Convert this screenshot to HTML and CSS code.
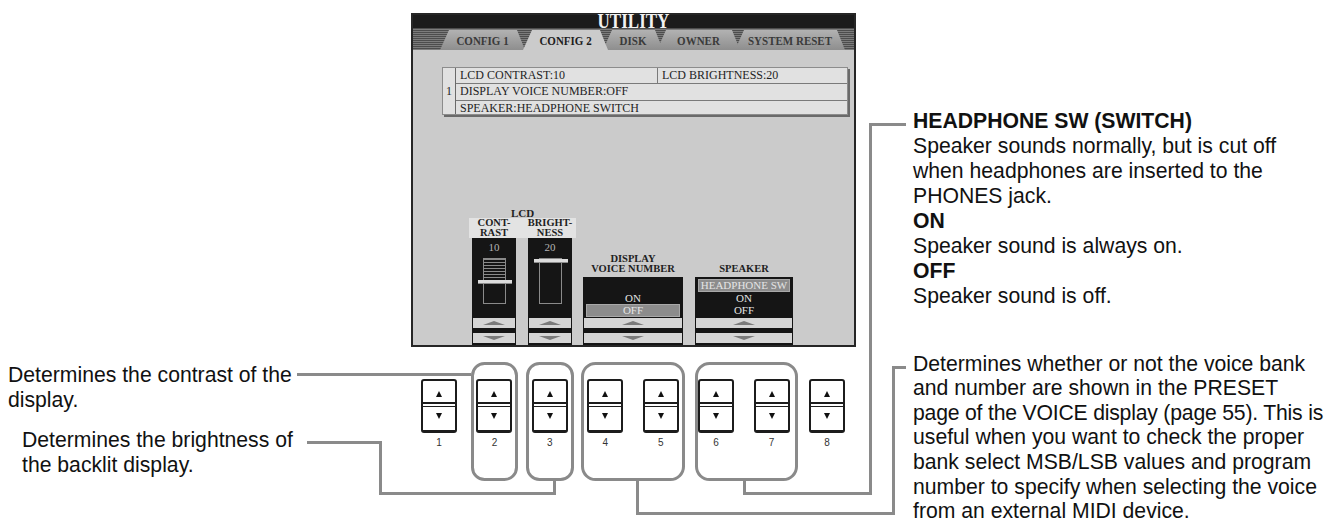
FILE: index.html
```html
<!DOCTYPE html>
<html>
<head>
	<title>utility - config 2</title>

	<link rel="stylesheet" href="styles.css">

</head>
<body>

<div class="page">

	<div class="notes-left">
		<p class="note note-contrast">Determines the contrast of the<br>display.</p>
		<p class="note note-bright">Determines the brightness of<br>the backlit display.</p>
	</div>

	<div class="panel">
		<div class="lcd">
			<div class="lcd-title"><span>UTILITY</span></div>
			<div class="tabs">
				<div class="tab tab-c1"><span>CONFIG 1</span></div>
				<div class="tab tab-c2 active"><span>CONFIG 2</span></div>
				<div class="tab tab-disk"><span>DISK</span></div>
				<div class="tab tab-owner"><span>OWNER</span></div>
				<div class="tab tab-reset"><span>SYSTEM RESET</span></div>
			</div>

			<div class="lcd-body">
				<div class="list">
					<div class="list-num">1</div>
					<div class="list-rows">
						<div class="row"><span class="cell cell-first">LCD CONTRAST:10</span><span class="cell">LCD BRIGHTNESS:20</span></div>
						<div class="row"><span class="cell">DISPLAY VOICE NUMBER:OFF</span></div>
						<div class="row"><span class="cell">SPEAKER:HEADPHONE SWITCH</span></div>
					</div>
				</div>

				<div class="controls">
					<div class="ctl ctl-lcd">
						<div class="ctl-head">LCD</div>
						<div class="slider-labels">
							<div class="slider-label">CONT-<span>RAST</span></div>
							<div class="slider-label">BRIGHT-<span>NESS</span></div>
						</div>
						<div class="sliders">
							<div class="slider">
								<div class="val">10</div>
								<div class="track">
									<div class="fill"></div>
									<div class="thumb thumb-contrast"></div>
								</div>
								<div class="updown"><div class="up"></div><div class="down"></div></div>
							</div>
							<div class="slider">
								<div class="val">20</div>
								<div class="track">
									<div class="thumb thumb-bright"></div>
								</div>
								<div class="updown"><div class="up"></div><div class="down"></div></div>
							</div>
						</div>
					</div>

					<div class="ctl ctl-voice">
						<div class="ctl-title">DISPLAY<br>VOICE NUMBER</div>
						<div class="opt-box">
							<div class="opt"></div>
							<div class="opt">ON</div>
							<div class="opt sel">OFF</div>
							<div class="updown"><div class="up"></div><div class="down"></div></div>
						</div>
					</div>

					<div class="ctl ctl-speaker">
						<div class="ctl-title">SPEAKER</div>
						<div class="opt-box">
							<div class="opt sel">HEADPHONE SW</div>
							<div class="opt">ON</div>
							<div class="opt">OFF</div>
							<div class="updown"><div class="up"></div><div class="down"></div></div>
						</div>
					</div>
				</div>
			</div>
		</div>

		<div class="keys">
			<div class="key-wrap"><div class="key"><div class="key-up"></div><div class="key-mid"></div><div class="key-down"></div></div><div class="key-num">1</div></div>
			<div class="key-wrap"><div class="key"><div class="key-up"></div><div class="key-mid"></div><div class="key-down"></div></div><div class="key-num">2</div></div>
			<div class="key-wrap"><div class="key"><div class="key-up"></div><div class="key-mid"></div><div class="key-down"></div></div><div class="key-num">3</div></div>
			<div class="key-wrap"><div class="key"><div class="key-up"></div><div class="key-mid"></div><div class="key-down"></div></div><div class="key-num">4</div></div>
			<div class="key-wrap"><div class="key"><div class="key-up"></div><div class="key-mid"></div><div class="key-down"></div></div><div class="key-num">5</div></div>
			<div class="key-wrap"><div class="key"><div class="key-up"></div><div class="key-mid"></div><div class="key-down"></div></div><div class="key-num">6</div></div>
			<div class="key-wrap"><div class="key"><div class="key-up"></div><div class="key-mid"></div><div class="key-down"></div></div><div class="key-num">7</div></div>
			<div class="key-wrap"><div class="key"><div class="key-up"></div><div class="key-mid"></div><div class="key-down"></div></div><div class="key-num">8</div></div>
		</div>
	</div>

	<div class="notes-right">
		<p class="note">
			<b>HEADPHONE SW (SWITCH)</b><br>
			Speaker sounds normally, but is cut off<br>
			when headphones are inserted to the<br>
			PHONES jack.<br>
			<b>ON</b><br>
			Speaker sound is always on.<br>
			<b>OFF</b><br>
			Speaker sound is off.
		</p>
		<p class="note note-voice">
			Determines whether or not the voice bank<br>
			and number are shown in the PRESET<br>
			<span class="tight">page of the VOICE display (page 55). This is</span><br>
			useful when you want to check the proper<br>
			bank select MSB/LSB values and program<br>
			number to specify when selecting the voice<br>
			from an external MIDI device.
		</p>
	</div>

	<!-- callout lines and button groups drawn over the page -->
	<svg class="callouts" width="1339" height="524" viewBox="0 0 1339 524">
		<g fill="none" stroke="#8a8a8a" stroke-width="3">
			<rect x="472.5" y="363.5" width="44" height="116" rx="12"/>
			<rect x="527.5" y="363.5" width="45" height="116" rx="12"/>
			<rect x="582.5" y="363.5" width="101" height="116" rx="13"/>
			<rect x="696.5" y="363.5" width="100" height="116" rx="13"/>

			<polyline points="297,374.5 471,374.5"/>
			<polyline points="307,442.5 380.5,442.5 380.5,493.5 554.5,493.5 554.5,481"/>
			<polyline points="637.5,481 637.5,513.5 893.5,513.5 893.5,367.5 906,367.5"/>
			<polyline points="744.5,481 744.5,493.5 870.5,493.5 870.5,124.5 906,124.5"/>
		</g>
	</svg>

</div>

</body>
</html>
```

FILE: styles.css
```css
body{
	margin: 0;
	background: #fff;
	font-family: "Liberation Sans", Arial, sans-serif;
	color: #111;
}

.page{
	position: relative;
	display: flex;
	width: 1339px;
	height: 524px;
	overflow: hidden;
}

/* text notes */

.note{
	margin: 0;
	font-size: 21.2px;
	line-height: 25px;
	white-space: nowrap;
}

.notes-left{
	width: 411px;
	flex: none;
	padding-top: 362px;
	box-sizing: border-box;
}

.note-contrast{
	margin-left: 8px;
}

.note-bright{
	margin: 15px 0 0 22px;
}

.notes-right{
	flex: 1;
	padding: 108px 0 0 57px;
}

.note-voice{
	margin-top: 43.7px;
	line-height: 24.6px;
}

.tight{
	letter-spacing: -0.2px;
}

/* lcd screen */

.panel{
	width: 445px;
	flex: none;
	padding-top: 13px;
}

.lcd{
	width: 445px;
	height: 334px;
	box-sizing: border-box;
	border: 2px solid #262626;
	background: #cbcbcb;
	display: flex;
	flex-direction: column;
	font-family: "Liberation Serif", "Times New Roman", serif;
	color: #1e1e1e;
}

.lcd-title{
	height: 13px;
	line-height: 14px;
	background: #1b1b1b;
	color: #f2f2f2;
	font-size: 17px;
	font-weight: bold;
	text-align: center;
}

.lcd-title span{
	display: inline-block;
	transform: scaleY(1.2);
}

.tabs{
	height: 22px;
	display: flex;
	align-items: flex-end;
	padding-left: 27px;
	background: repeating-linear-gradient(#4d4d4d 0 1px, #7c7c7c 1px 2px);
}

.tab{
	height: 20px;
	line-height: 21px;
	font-size: 11px;
	font-weight: bold;
	text-align: center;
	color: #3a3a3a;
	background: linear-gradient(#b2b2b2, #8e8e8e);
	clip-path: polygon(9px 0, calc(100% - 8px) 0, 100% 100%, 0 100%);
	position: relative;
}

.tab span{
	display: inline-block;
	transform: scaleY(1.2);
}

.tab.active{
	background: #cbcbcb;
	color: #1e1e1e;
	z-index: 2;
}

.tab-c1{ width: 85px; }
.tab-c2{ width: 85px; margin-left: -2px; }
.tab-disk{ width: 60px; margin-left: -5px; }
.tab-owner{ width: 83px; margin-left: -6px; }
.tab-reset{ width: 110px; margin-left: -5px; }

.lcd-body{
	flex: 1;
	display: flex;
	flex-direction: column;
	padding: 17px 0 0 29px;
}

.list{
	width: 406px;
	height: 48px;
	box-sizing: border-box;
	display: flex;
	background: #e1e1e1;
	border: 1px solid #8c8c8c;
	box-shadow: 2px 2px 0 #6a6a6a;
	font-size: 12px;
}

.list-num{
	width: 12px;
	border-right: 1px solid #6a6a6a;
	display: flex;
	align-items: center;
	justify-content: center;
}

.list-rows{
	flex: 1;
}

.row{
	display: flex;
	height: 15.33px;
	line-height: 15px;
	border-bottom: 1px solid #7a7a7a;
}

.row:last-child{
	border-bottom: none;
}

.cell{
	padding-left: 4px;
}

.cell-first{
	width: 197px;
	border-right: 1px solid #7a7a7a;
}

/* on-screen controls */

.controls{
	margin-top: auto;
	display: flex;
	align-items: flex-end;
	padding-left: 27px;
}

.ctl-head{
	font-size: 11px;
	font-weight: bold;
	line-height: 10px;
	text-align: center;
}

.ctl-lcd{
	width: 107px;
}

.slider-labels{
	display: flex;
	gap: 12px;
	height: 20px;
	padding: 0 4px 0 3px;
	background: #e3e3e3;
}

.slider-label{
	width: 44px;
	display: flex;
	flex-direction: column;
	align-items: center;
	font-size: 10.5px;
	font-weight: bold;
	line-height: 10px;
	white-space: nowrap;
}

.sliders{
	display: flex;
	gap: 12px;
	padding: 0 4px 0 3px;
}

.slider{
	width: 44px;
	height: 107px;
	background: #151515;
	display: flex;
	flex-direction: column;
	align-items: center;
}

.val{
	margin-top: 3px;
	line-height: 12px;
	font-size: 11px;
	color: #b4b4b4;
}

.track{
	position: relative;
	margin-top: 5px;
	width: 23px;
	height: 46px;
	box-sizing: border-box;
	border: 1px solid #8a8a8a;
}

.fill{
	height: 22px;
	background: repeating-linear-gradient(#8a8a8a 0 1px, transparent 1px 3px);
}

.thumb{
	position: absolute;
	left: -6px;
	width: 34px;
	height: 3px;
	background: #dcdcdc;
	border-bottom: 1px solid #8c8c8c;
}

.thumb-contrast{
	top: 21px;
}

.thumb-bright{
	top: 0;
}

.updown{
	margin-top: 14px;
	width: 42px;
}

.up, .down{
	height: 10px;
	background: #d5d5d5;
	display: flex;
	align-items: center;
	justify-content: center;
}

.down{
	margin-top: 5px;
}

.up::after{
	content: "";
	border-left: 11px solid transparent;
	border-right: 11px solid transparent;
	border-bottom: 4px solid #7a7a7a;
}

.down::after{
	content: "";
	border-left: 11px solid transparent;
	border-right: 11px solid transparent;
	border-top: 4px solid #7a7a7a;
}

.ctl-title{
	font-size: 10.5px;
	font-weight: bold;
	line-height: 10px;
	text-align: center;
	margin-bottom: 3px;
	white-space: nowrap;
}

.ctl-voice{
	width: 100px;
	margin-left: 7px;
}

.ctl-speaker{
	width: 98px;
	margin-left: 12px;
}

.opt-box{
	height: 68px;
	box-sizing: border-box;
	padding: 2px 3px 0;
	background: #151515;
}

.opt{
	height: 12.5px;
	line-height: 12.5px;
	font-size: 11px;
	color: #e4e4e4;
	text-align: center;
	white-space: nowrap;
}

.opt.sel{
	background: #8c8c8c;
	box-shadow: inset 0 0 0 1px #a8a8a8;
}

.opt-box .updown{
	width: auto;
	margin: 1.5px -2px 0;
}

/* hardware buttons */

.keys{
	display: flex;
	gap: 19.43px;
	padding-left: 10px;
	margin-top: 32px;
}

.key-wrap{
	width: 36px;
	display: flex;
	flex-direction: column;
	align-items: center;
}

.key{
	width: 36px;
	height: 54px;
	box-sizing: border-box;
	border: 2px solid #1c1c1c;
	border-bottom-width: 3px;
	border-radius: 3px;
	display: flex;
	flex-direction: column;
	background: #fff;
}

.key-up{
	height: 21px;
	padding-top: 4px;
	box-sizing: border-box;
	display: flex;
	align-items: center;
	justify-content: center;
}

.key-mid{
	height: 5px;
	box-sizing: border-box;
	border-top: 2px solid #1c1c1c;
	border-bottom: 1px solid #1c1c1c;
}

.key-down{
	flex: 1;
	padding-bottom: 6px;
	display: flex;
	align-items: center;
	justify-content: center;
}

.key-up::after{
	content: "";
	border-left: 3.5px solid transparent;
	border-right: 3.5px solid transparent;
	border-bottom: 6px solid #111;
}

.key-down::after{
	content: "";
	border-left: 3.5px solid transparent;
	border-right: 3.5px solid transparent;
	border-top: 6px solid #111;
}

.key-num{
	margin-top: 4px;
	font-size: 10px;
	line-height: 12px;
	color: #333;
}

.callouts{
	position: absolute;
	top: 0;
	left: 0;
	pointer-events: none;
}
```
